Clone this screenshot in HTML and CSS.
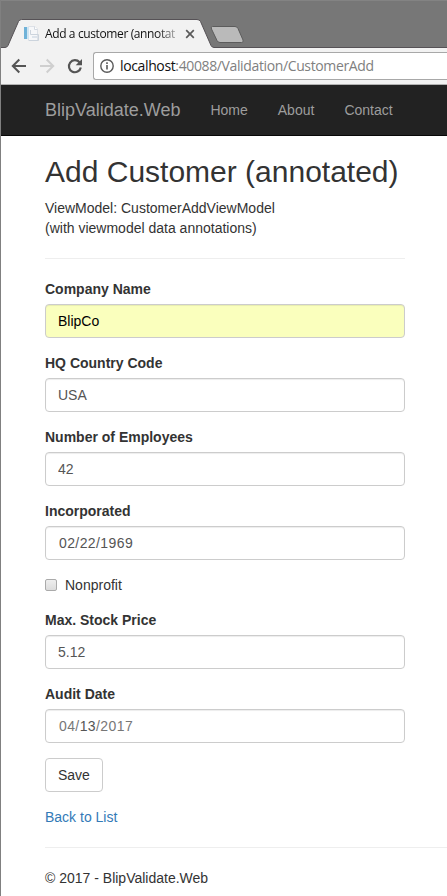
FILE: index.html
```html
<!DOCTYPE html>
<html lang="en">
<head>
<meta charset="utf-8">
<title>Add a customer (annotated)</title>
<link rel="stylesheet" href="styles.css">
</head>
<body>
<div class="window">
  <header class="tabstrip">
    <svg class="tab-shape" width="446" height="48" viewBox="1 0 446 48">
      <path d="M0 47.5H5Q7 47.500 8 45.500L18.500 21.500Q19.500 19.500 21.500 19.500H197Q199.500 19.500 200.500 21.500L211 45.500Q212 47.500 214 47.500H447V49H0Z" fill="#f2f2f2" stroke="#565256"/>
      <path d="M212.500 26.500H235Q237 26.500 238 28.500L243 40Q244 42.500 241.500 42.500H220Q218 42.500 217 40.500L211.500 29Q210.500 26.500 212.500 26.500Z" fill="#bababa" stroke="#5c5c5c"/>
    </svg>
    <div class="tab">
      <svg class="favicon" width="16" height="16" viewBox="0 0 16 16">
        <path d="M5.500 .5H12L14.500 3V14.500H5.500Z" fill="#f6f7f9" stroke="#dde1e7"/>
        <path d="M11.500 .5V3.500H14.500" fill="#fff" stroke="#d3d9e1"/>
        <path d="M1 1H4V13H1Z" fill="#6fb2d8"/>
        <path d="M4 1H6V13H4Z" fill="#cfe5f2"/>
        <path d="M7.500 4V8.500H15.500V14.500H6" fill="none" stroke="#ccd4dd"/>
        <path d="M9 10H14V12H9Z" fill="#dce3eb"/>
      </svg>
      <span class="tab-title">Add a customer (annotat</span>
      <svg class="close" width="10" height="10" viewBox="0 0 10 10"><path d="M1.200 1.200L8.800 8.800M8.800 1.200L1.200 8.800" stroke="#5a5a5a" stroke-width="1.700"/></svg>
    </div>
  </header>
  <div class="toolbar">
    <svg class="controls" width="92" height="36" viewBox="1 48 92 36" fill="none">
      <path d="M26 66H13M19.300 59.500L12.800 66L19.300 72.500" stroke="#555" stroke-width="2"/>
      <path d="M40 66H53M46.700 59.500L53.200 66L46.700 72.500" stroke="#cfcfcf" stroke-width="2"/>
      <path d="M79.500 62.300A6 6 0 1 0 80.800 67.500" stroke="#555" stroke-width="2.200"/>
      <path d="M82 59V65.300H75.700Z" fill="#555"/>
    </svg>
    <div class="address">
      <svg width="14" height="14" viewBox="0 0 14 14" fill="none"><circle cx="7" cy="7" r="6.200" stroke="#5a5a5a" stroke-width="1.400"/><path d="M7 6V10.500M7 3.300V4.900" stroke="#5a5a5a" stroke-width="1.600"/></svg>
      <span class="url"><span class="host">localhost</span>:40088/Validation/CustomerAdd</span>
    </div>
  </div>
  <nav class="navbar">
    <a class="brand">BlipValidate.Web</a>
    <a>Home</a>
    <a>About</a>
    <a>Contact</a>
  </nav>
  <main class="content">
    <h2>Add Customer (annotated)</h2>
    <p>ViewModel: CustomerAddViewModel<br>(with viewmodel data annotations)</p>
    <hr>
    <form>
      <label for="name">Company Name</label>
      <input class="field autofill" id="name" value="BlipCo">
      <label for="country">HQ Country Code</label>
      <input class="field" id="country" value="USA">
      <label for="employees">Number of Employees</label>
      <input class="field" id="employees" value="42">
      <label for="incorporated">Incorporated</label>
      <input class="field date" id="incorporated" value="02/22/1969">
      <div class="checkbox"><input type="checkbox" id="nonprofit"><label for="nonprofit">Nonprofit</label></div>
      <label for="price">Max. Stock Price</label>
      <input class="field" id="price" value="5.12">
      <label for="audit">Audit Date</label>
      <div class="field date audit" id="audit"><span>04/</span>13<span>/2017</span></div>
      <button type="button">Save</button>
    </form>
    <a class="back">Back to List</a>
  </main>
  <footer>© 2017 - BlipValidate.Web</footer>
</div>
</body>
</html>
```
FILE: styles.css
```css
* { box-sizing: border-box; }
body {
  margin: 0;
  color: #333;
  background: #fff;
  font: 14px/20px "Liberation Sans", Arial, sans-serif;
}
.window {
  height: 896px;
  border-left: 1px solid #808080;
  overflow: hidden;
}
.tabstrip {
  position: relative;
  height: 48px;
  background: #777;
  border-top: 1px solid #838383;
}
.tab-shape { position: absolute; left: 0; top: -1px; }
.tab {
  position: relative;
  display: flex;
  align-items: center;
  width: 200px;
  padding: 18px 0 0 22px;
  height: 47px;
}
.favicon { flex: none; margin-top: 1px; }
.tab-title {
  width: 136px;
  margin-left: 6px;
  white-space: nowrap;
  color: #111;
  font: 12px/20px "Open Sans", sans-serif;
  letter-spacing: -.38px;
  -webkit-mask-image: linear-gradient(to right, #000 112px, transparent 140px);
  mask-image: linear-gradient(to right, #000 112px, transparent 140px);
}
.close { flex: none; margin-left: 4px; margin-top: 1px; }
.toolbar {
  display: flex;
  height: 37px;
  background: #f2f2f2;
  border-bottom: 1px solid #b2b2b2;
}
.controls { flex: none; }
.address {
  display: flex;
  align-items: center;
  flex: 1;
  height: 28px;
  margin-top: 4px;
  padding-left: 6px;
  border: 1px solid #a8a8a8;
  border-right: 0;
  border-radius: 3px 0 0 3px;
  background: #fff;
}
.url {
  margin-left: 6px;
  white-space: nowrap;
  color: #808080;
  font: 14px/20px "Open Sans", sans-serif;
  letter-spacing: -.37px;
}
.host { color: #111; }
.navbar {
  display: flex;
  height: 51px;
  padding-left: 29px;
  background: #222;
  border-bottom: 1px solid #080808;
}
.navbar a {
  padding: 15px;
  color: #9d9d9d;
}
.navbar .brand { font-size: 18px; }
.content { padding: 19px 42px 0 44px; }
h2 {
  margin: 0 0 10px;
  font-size: 30px;
  font-weight: 400;
  line-height: 33px;
  white-space: nowrap;
}
p { margin: 0; }
hr {
  margin: 20px 0;
  border: 0;
  border-top: 1px solid #eee;
}
label {
  display: block;
  margin-bottom: 5px;
  font-weight: 700;
}
.field {
  display: block;
  width: 100%;
  height: 34px;
  margin-bottom: 15px;
  padding: 6px 12px;
  border: 1px solid #ccc;
  border-radius: 4px;
  background: #fff;
  box-shadow: inset 0 1px 1px rgba(0, 0, 0, .075);
  color: #555;
  font: inherit;
}
.autofill { background: #faffbd; color: #000; }
.date { padding-left: 13px; letter-spacing: .4px; }
.audit span { color: #777; }
.checkbox {
  display: flex;
  align-items: center;
  height: 20px;
  margin-bottom: 15px;
}
.checkbox input {
  appearance: none;
  width: 12px;
  height: 12px;
  margin: 0 8px 0 0;
  border: 1px solid #aaa;
  border-radius: 2px;
  background: linear-gradient(#eee, #dcdcdc);
}
.checkbox label { margin: 0; font-weight: 400; }
button {
  display: block;
  height: 34px;
  margin: 0 0 15px;
  padding: 6px 12px;
  border: 1px solid #ccc;
  border-radius: 4px;
  background: #fff;
  color: #333;
  font: inherit;
}
.back { display: block; color: #337ab7; }
footer {
  margin: 20px 0 0 44px;
  padding-top: 20px;
  border-top: 1px solid #eee;
}
```
